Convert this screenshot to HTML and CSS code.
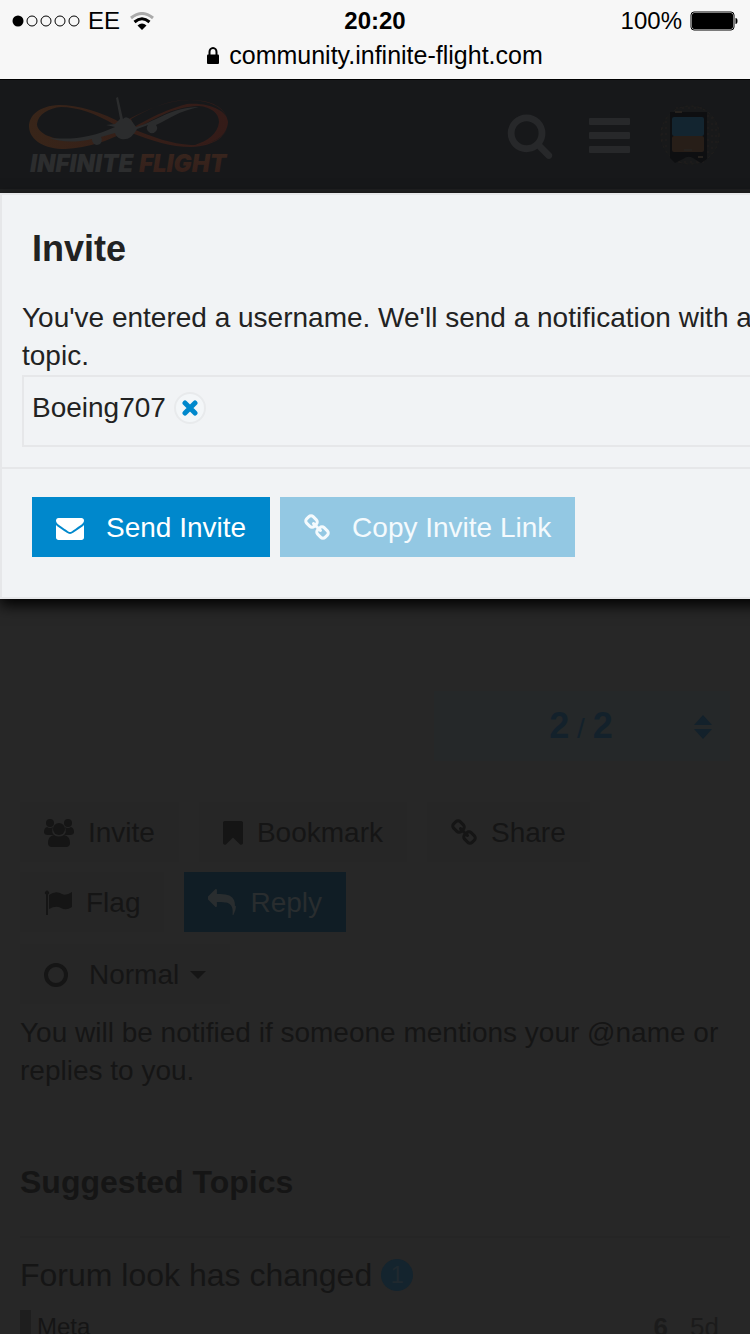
FILE: index.html
```
<!DOCTYPE html>
<html lang="en">

<head>
    <meta charset="UTF-8">
    <meta name="viewport" content="width=device-width, initial-scale=1.0">
    <title>Infinite Flight Community</title>
    <link rel="stylesheet" href="styles.css">
</head>

<body>
    <!-- shared icons -->
    <svg class="defs" width="0" height="0">
        <symbol id="link" viewBox="0 0 1664 1792">
            <path d="M1456 1216q0-40-28-68l-208-208q-28-28-68-28-42 0-72 32 3 3 19 18.500t21.500 21.500 15 19 13 25.500 3.500 27.500q0 40-28 68t-68 28q-15 0-27.500-3.500t-25.500-13-19-15-21.500-21.500-18.500-19q-33 31-33 73 0 40 28 68l206 207q27 27 68 27 40 0 68-26l147-146q28-28 28-67zm-703-705q0-40-28-68l-206-207q-28-28-68-28-39 0-68 27l-147 146q-28 28-28 67 0 40 28 68l208 208q27 27 68 27 42 0 72-31-3-3-19-18.500t-21.500-21.500-15-19-13-25.500-3.500-27.500q0-40 28-68t68-28q15 0 27.500 3.500t25.500 13 19 15 21.500 21.500 18.500 19q33-31 33-73zm895 705q0 120-85 203l-147 146q-83 83-203 83-121 0-204-85l-206-207q-83-83-83-203 0-123 88-209l-88-88q-86 88-208 88-120 0-204-84l-208-208q-84-84-84-204t85-203l147-146q83-83 203-83 121 0 204 85l206 207q83 83 83 203 0 123-88 209l88 88q86-88 208-88 120 0 204 84l208 208q84 84 84 204z"/>
        </symbol>
    </svg>

    <div class="status-bar">
        <div class="status-row">
            <div class="carrier">
                <svg width="68" height="12" viewBox="0 0 68 12">
                    <circle cx="6" cy="6" r="5.500"/>
                    <g fill="none" stroke="#000">
                        <circle cx="20" cy="6" r="5"/>
                        <circle cx="34" cy="6" r="5"/>
                        <circle cx="48" cy="6" r="5"/>
                        <circle cx="62" cy="6" r="5"/>
                    </g>
                </svg>
                <span>EE</span>
                <svg class="wifi" width="24" height="18" viewBox="0 0 24 18">
                    <path d="M1 6Q12-3 23 6" fill="none" stroke="#aaa" stroke-width="3"/>
                    <path d="M4.500 10Q12 3.500 19.500 10" fill="none" stroke="#000" stroke-width="3"/>
                    <path d="M7.500 13.500Q12 9.500 16.500 13.500L12 18z"/>
                </svg>
            </div>
            <time>20:20</time>
            <div class="battery">
                <span>100%</span>
                <svg width="48" height="20" viewBox="0 0 48 20">
                    <rect x="1" y="1" width="43" height="18" rx="3" fill="none" stroke="#000" stroke-width="1"/>
                    <rect x="2" y="2" width="41" height="16" rx="2"/>
                    <path d="M45.500 7q2 0 2 3t-2 3z"/>
                </svg>
            </div>
        </div>
        <div class="address">
            <svg width="12" height="17" viewBox="0 0 12 17">
                <path d="M2.500 8V5a3.500 4 0 0 1 7 0V8" fill="none" stroke="#000" stroke-width="2"/>
                <rect y="7.500" width="12" height="9.500" rx="1"/>
            </svg>
            <span>community.infinite-flight.com</span>
        </div>
    </div>

    <div class="site">
        <header class="d-header">
            <a class="logo" href="#" aria-label="Infinite Flight">
                <svg width="204" height="80" viewBox="0 0 204 80">
                    <defs>
                        <linearGradient id="loop">
                            <stop offset="0" stop-color="#382519"/>
                            <stop offset=".5" stop-color="#351f18"/>
                            <stop offset="1" stop-color="#341b18"/>
                        </linearGradient>
                        <linearGradient id="word" x1="0" y1="0" x2="0" y2="1">
                            <stop offset="0" stop-color="#38261e"/>
                            <stop offset="1" stop-color="#341e19"/>
                        </linearGradient>
                    </defs>
                    <path fill="url(#loop)" fill-rule="evenodd" d="M96 29C76 17 50 10 32 10C12 11 2 20 2 32C3 46 18 54 38 54C62 53 82 45 96 38C112 30 130 17 160 9C182 7 201 16 201 27C200 43 184 50 164 50C144 49 126 42 106 34L102 37C126 46 144 52 164 52C188 51 201 41 201 27C199 12 184 5 163 5C139 5 120 15 102 24C98 26 92 29 88 33C74 40 58 45 41 45C22 44 10 37 10 29C11 19 22 13 34 12C50 12 68 18 88 30zM160 5C139 5 120 15 104 24L108 34C126 26 142 12 172 11C184 12 192 18 192 27C191 39 180 46 168 50C188 49 201 41 201 27C199 13 184 5 160 5z"/>
                    <path fill="#2b2c2d" d="M22 43C48 45 66 42 88 32L79 30L88 29L93 24L89 3L91 2L96 24Q99 20 104 25L109 32C126 28 144 12 172 12C152 16 142 24 129 30A5 5 0 1 1 121 30L110 34Q104 46 94 44Q89 42 88 38L74 42A5 5 0 1 1 65 44C48 48 33 47 22 43z"/>
                    <text class="logo-text" x="3" y="77" fill="#2c2d2e">INFINITE</text>
                    <text class="logo-text" x="112" y="77" fill="url(#word)">FLIGHT</text>
                </svg>
            </a>
            <nav class="icons">
                <a href="#" aria-label="Search">
                    <svg width="48" height="48" viewBox="0 0 1792 1792">
                        <path d="M1216 832q0-185-131.500-316.500t-316.500-131.500-316.500 131.500-131.500 316.500 131.500 316.500 316.500 131.500 316.500-131.500 131.500-316.500zm512 832q0 52-38 90t-90 38q-54 0-90-38l-343-342q-179 124-399 124-143 0-273.500-55.500t-225-150-150-225-55.500-273.500 55.500-273.500 150-225 225-150 273.500-55.500 273.500 55.500 225 150 150 225 55.500 273.500q0 220-124 399l343 343q37 37 37 90z"/>
                    </svg>
                </a>
                <a href="#" aria-label="Menu">
                    <svg width="48" height="48" viewBox="0 0 48 48">
                        <rect x="7" y="7" width="41" height="7" rx="1"/>
                        <rect x="7" y="21" width="41" height="7" rx="1"/>
                        <rect x="7" y="35" width="41" height="7" rx="1"/>
                    </svg>
                </a>
                <a href="#" aria-label="Your profile">
                    <svg width="64" height="64" viewBox="0 0 64 64">
                        <circle cx="32" cy="32" r="30" fill="#18191a"/>
                        <g fill="none" stroke="#221f1c" stroke-dasharray="2 4">
                            <circle cx="32" cy="32" r="29"/>
                            <path d="M50 12v42M54 14v37M58 20v24M8 18v27M4 24v16M18 5h30M20 59h26"/>
                        </g>
                        <path fill="#0e0f11" d="M12 9h37v47l-6 4-8-5q-5-3-10 1l-8 4-5-5z"/>
                        <rect x="14" y="14" width="32" height="19" rx="2" fill="#132530"/>
                        <rect x="14" y="33" width="32" height="16" rx="2" fill="#271e18"/>
                        <path d="M26 47h8M40 54h5M17 9h7" stroke="#26221e" stroke-width="2"/>
                    </svg>
                </a>
            </nav>
        </header>

        <main>
            <div class="post-stream"></div>
            <button class="progress">
                <span><b>2</b> / <b>2</b></span>
                <svg width="18" height="24" viewBox="0 0 18 24">
                    <path d="M9 0l9 10H0zM9 24l9-10H0z"/>
                </svg>
            </button>

            <div class="topic-buttons">
                <button class="btn">
                    <svg width="30" height="28" viewBox="0 0 30 28">
                        <circle cx="6" cy="4" r="4"/>
                        <circle cx="24" cy="4" r="4"/>
                        <path d="M3 8q3 2 6 0-2 5 1 8H4Q0 16 0 13q0-4 3-5zM27 8q-3 2-6 0 2 5-1 8h6q4 0 4-3 0-4-3-5z"/>
                        <circle cx="15" cy="10" r="6"/>
                        <path d="M10 16q5 3 10 0 6 1 6 8 0 4-4 4H8q-4 0-4-4 0-7 6-8z"/>
                    </svg>
                    Invite
                </button>
                <button class="btn">
                    <svg width="20" height="28" viewBox="256 0 1280 1792">
                        <path d="M1420 128q23 0 44 9 33 13 52.500 41t19.500 62v1289q0 34-19.500 62t-52.500 41q-19 8-44 8-48 0-83-32l-441-424-441 424q-36 33-83 33-23 0-44-9-33-13-52.500-41t-19.500-62v-1289q0-34 19.500-62t52.500-41q21-9 44-9h1048z"/>
                    </svg>
                    Bookmark
                </button>
                <button class="btn">
                    <svg width="26" height="28"><use href="#link"/></svg>
                    Share
                </button>
                <button class="btn">
                    <svg width="28" height="28" viewBox="0 0 28 28">
                        <path d="M2 5.500a2 2 0 1 1 2 0V26H2z"/>
                        <path d="M5 6q7-5 13-1 4 2 10-2v15q-6 4-11 1-5-3-12 1z"/>
                    </svg>
                    Flag
                </button>
                <button class="btn btn-reply">
                    <svg width="28" height="28" viewBox="0 0 1792 1792">
                        <path d="M1792 1120q0 166-127 451-3 7-10.500 24t-13.500 30-13 22q-12 17-28 17-15 0-23.500-10t-8.500-25q0-9 2.500-26.500t2.500-23.500q5-68 5-123 0-112-19.500-200.500t-54-153.500-89-112-117-79-146-46.500-167.500-22.500-190.500-7h-224v256q0 26-19 45t-45 19-45-19l-512-512q-19-19-19-45t19-45l512-512q19-19 45-19t45 19 19 45v256h224q713 0 875 403 53 134 53 333z"/>
                    </svg>
                    Reply
                </button>
            </div>

            <button class="btn btn-level">
                <svg width="24" height="24" viewBox="0 0 24 24">
                    <circle cx="12" cy="12" r="10" fill="none" stroke="#151515" stroke-width="4"/>
                </svg>
                <span>Normal</span>
                <svg class="caret" width="16" height="8" viewBox="0 0 16 8">
                    <path d="M0 0h16l-8 8z"/>
                </svg>
            </button>
            <p class="notify">You will be notified if someone mentions your @name or replies to you.</p>

            <section class="suggested">
                <h3>Suggested Topics</h3>
                <div class="topic">
                    <div class="topic-title">
                        <a href="#">Forum look has changed</a>
                        <span class="badge">1</span>
                    </div>
                    <div class="topic-info">
                        <a class="category" href="#">Meta</a>
                        <span class="stats"><b>6</b><span>5d</span></span>
                    </div>
                </div>
            </section>
        </main>

        <div class="modal" role="dialog" aria-labelledby="modal-title">
            <h2 id="modal-title">Invite</h2>
            <div class="modal-body">
                <label for="invitee">You've entered a username. We'll send a notification with a link inviting them to this topic.</label>
                <div class="selector">
                    <span>Boeing707</span>
                    <button class="remove" aria-label="Remove">
                        <svg width="16" height="16" viewBox="0 0 16 16">
                            <path d="M3 3l10 10M13 3L3 13" stroke="#08c" stroke-width="5" stroke-linecap="round"/>
                        </svg>
                    </button>
                    <input id="invitee" type="text">
                </div>
            </div>
            <div class="modal-footer">
                <button class="btn-primary">
                    <svg width="28" height="28" viewBox="0 0 1792 1792">
                        <path d="M1792 710v794q0 66-47 113t-113 47h-1472q-66 0-113-47t-47-113v-794q44 49 101 87 362 246 497 345 57 42 92.500 65.500t94.500 48 110 24.500h2q51 0 110-24.500t94.500-48 92.500-65.500q170-123 498-345 57-39 100-87zm0-294q0 79-49 151t-122 123q-376 261-468 325-10 7-42.500 31t-54 38.500-52 32.500-57.500 27-50 9h-2q-23 0-50-9t-57.500-27-52-32.500-54-38.500-42.500-31q-91-64-262-182.500t-205-142.500q-62-42-117-115.500t-55-136.500q0-78 41.500-130t118.500-52h1472q65 0 112.500 47t47.500 113z"/>
                    </svg>
                    Send Invite
                </button>
                <button class="btn-primary" disabled>
                    <svg width="26" height="28"><use href="#link"/></svg>
                    Copy Invite Link
                </button>
            </div>
        </div>
    </div>
</body>

</html>
```

FILE: styles.css
```
* {
    box-sizing: border-box;
}

body {
    margin: 0;
    height: 100vh;
    overflow: hidden;
    display: flex;
    flex-direction: column;
    background: #272727;
    color: #151515;
    font: 28px/38px "Liberation Sans", Helvetica, Arial, sans-serif;
}

a {
    color: inherit;
    text-decoration: none;
}

button {
    border: 0;
    font: inherit;
    color: inherit;
    white-space: nowrap;
}

svg {
    fill: currentColor;
    flex: none;
    display: block;
}

.defs {
    position: absolute;
}

/* phone status bar */
.status-bar {
    flex: none;
    height: 79px;
    background: #f7f7f7;
    color: #000;
    font-size: 24px;
    line-height: 28px;
}

.status-row {
    display: grid;
    grid-template-columns: 1fr auto 1fr;
    align-items: center;
    padding: 7px 12px 0;
}

.status-row time {
    font-weight: bold;
}

.carrier,
.battery,
.address {
    display: flex;
    align-items: center;
    gap: 8px;
}

.wifi {
    margin-left: 2px;
}

.battery {
    justify-content: flex-end;
}

.address {
    justify-content: center;
    gap: 10px;
    padding-top: 6px;
    font-size: 25px;
}

/* site */
.site {
    position: relative;
    flex: 1;
    min-height: 0;
    overflow: hidden;
}

.d-header {
    display: flex;
    align-items: center;
    justify-content: space-between;
    height: 114px;
    padding: 0 28px 0 27px;
    background: #17181a;
    border-top: 1px solid #000;
    border-bottom: 4px solid #202122;
}

.logo-text {
    font: italic 900 24px Inter, sans-serif;
}

.icons {
    display: flex;
    align-items: center;
    gap: 28px;
    color: #27282a;
}

main {
    padding: 0 20px;
}

.post-stream {
    height: 498px;
}

.progress {
    display: grid;
    grid-template-columns: 1fr auto;
    align-items: center;
    width: 296px;
    height: 70px;
    margin-left: auto;
    padding: 2px 18px 0 34px;
    background: #252829;
    color: #13212b;
}

.progress b {
    font-size: 36px;
}

.topic-buttons {
    display: flex;
    flex-wrap: wrap;
    gap: 10px 20px;
    margin: 41px 100px 12px 0;
}

.btn {
    display: flex;
    align-items: center;
    gap: 14px;
    height: 60px;
    padding: 2px 24px 0;
    background: #262626;
}

.btn-reply {
    background: #101d25;
    color: #292d2f;
}

.btn-level {
    gap: 21px;
}

.btn-level .caret {
    margin-left: -10px;
}

.notify {
    margin: 10px 0 70px;
}

.suggested h3 {
    margin: 0;
    font-size: 32px;
    line-height: 44px;
}

.topic {
    margin-top: 32px;
    border-top: 2px solid #252525;
    padding-top: 16px;
}

.topic-title {
    display: flex;
    align-items: center;
    gap: 9px;
    font-size: 32px;
    line-height: 42px;
}

.badge {
    width: 32px;
    height: 32px;
    border-radius: 50%;
    background: #14242e;
    color: #20292f;
    font-size: 24px;
    line-height: 32px;
    text-align: center;
}

.topic-info {
    display: flex;
    justify-content: space-between;
    margin-top: 14px;
    padding-right: 11px;
    line-height: 34px;
}

.category {
    border-left: 11px solid #1e1e1e;
    padding-left: 6px;
    font-size: 24px;
}

.stats {
    display: flex;
    gap: 22px;
    color: #1b1b1b;
    font-size: 26px;
}

/* invite dialog, wider than the phone screen */
.modal {
    position: absolute;
    top: 114px;
    left: 0;
    width: 150%;
    border: 2px solid #e6e7e9;
    background: #f1f3f5;
    color: #222;
    box-shadow: 0 6px 14px #000;
}

.modal h2 {
    margin: 0;
    padding: 30px 30px 26px;
    font-size: 36px;
    line-height: 48px;
}

.modal-body {
    padding: 0 20px 20px;
    border-bottom: 2px solid #e6e7e9;
}

.modal-body label {
    display: block;
}

.selector {
    display: flex;
    align-items: flex-start;
    gap: 8px;
    height: 72px;
    padding: 12px 8px;
    border: 2px solid #e6e7e9;
}

.selector input {
    flex: 1;
    border: 0;
    background: none;
    outline: none;
    font: inherit;
}

.remove {
    display: flex;
    align-items: center;
    justify-content: center;
    width: 32px;
    height: 32px;
    margin-top: 3px;
    padding: 0;
    border: 2px solid #e8eaec;
    border-radius: 50%;
    background: #f3f6f8;
}

.modal-footer {
    display: flex;
    gap: 10px;
    padding: 28px 30px 40px;
}

.btn-primary {
    display: flex;
    align-items: center;
    gap: 22px;
    height: 60px;
    padding: 2px 24px 0;
    background: #08c;
    color: #fff;
}

.btn-primary:disabled {
    background: #93c8e3;
    color: #f4fafd;
}
```
